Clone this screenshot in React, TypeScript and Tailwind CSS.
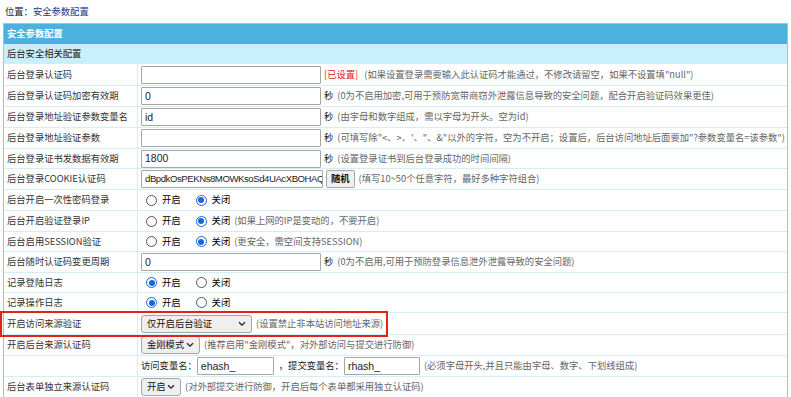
import React from 'react';

const font = { fontFamily: '"Noto Sans CJK SC", "Noto Sans", sans-serif' };
const latin = { fontFamily: '"Liberation Sans", "Noto Sans CJK SC", sans-serif' };

const Radio = ({ checked, label, last }: { checked?: boolean; label: string; last?: boolean }) => (
  <span className={`inline-flex items-center ${last ? '' : 'mr-[15px]'}`}>
    <span
      className={`inline-flex items-center justify-center w-[11px] h-[11px] rounded-full border bg-white ${
        checked ? 'border-[#1a66d6]' : 'border-[#555]'
      }`}
    >
      {checked && <span className="w-[6px] h-[6px] rounded-full bg-[#1a66d6]" />}
    </span>
    <span className="ml-[5px]">{label}</span>
  </span>
);

const Input = ({
  value = '',
  w = 'w-[180px]',
  size = 'text-[10.5px]',
}: {
  value?: string;
  w?: string;
  size?: string;
}) => (
  <span
    className={`inline-flex items-center h-[18px] ${w} ${size} shrink-0 border border-[#a6a6a6] bg-white px-[3px] text-[#222] rounded-[1px] overflow-hidden whitespace-nowrap`}
    style={latin}
  >
    {value}
  </span>
);

const Select = ({ label, w }: { label: string; w: string }) => (
  <span
    className={`inline-flex items-center justify-between h-[18px] ${w} shrink-0 border border-[#a6a6a6] bg-[#efefef] rounded-[3px] pl-[5px] pr-[5px] text-[9.3px] text-[#111]`}
  >
    <span>{label}</span>
    <svg width="8" height="6" viewBox="0 0 8 6">
      <path d="M1 1.2l3 3 3-3" fill="none" stroke="#222" strokeWidth="1.3" />
    </svg>
  </span>
);

const Hint = ({ children }: { children: React.ReactNode }) => (
  <span className="text-[#666] ml-[4px]">{children}</span>
);

const Sec = () => <span className="ml-[3px] text-[#222]">秒</span>;

const Row = ({
  label,
  children,
  h = 'h-[21px]',
}: {
  label?: string;
  children: React.ReactNode;
  h?: string;
}) => (
  <div className={`flex ${h} border-b border-[#d5eef6] bg-white`}>
    <div className="w-[134px] shrink-0 flex items-center pl-[3px] border-r border-[#d5eef6] text-[#333]">
      {label}
    </div>
    <div className="flex items-center pl-[3px] whitespace-nowrap">{children}</div>
  </div>
);

const Radios = ({ on }: { on: boolean }) => (
  <span className="pl-[5px] inline-flex items-center">
    <Radio checked={on} label="开启" />
    <Radio checked={!on} label="关闭" last />
  </span>
);

export default function App() {
  return (
    <div className="w-[791px] h-[397px] overflow-hidden bg-white text-[9.3px] leading-none" style={font}>
      <div className="h-[23px] flex items-center pl-[5px] text-[#222]">
        位置：<span className="text-[#17388c]">安全参数配置</span>
      </div>
      <div className="mx-[3px] border border-[#8ccbe3]">
        <div className="h-[20px] bg-[#4cb1dc] flex items-center pl-[3px] text-white font-bold">安全参数配置</div>
        <div className="h-[20px] bg-[#c9effc] flex items-center pl-[3px] text-[#222] border-b border-[#d5eef6]">
          后台安全相关配置
        </div>
        <Row label="后台登录认证码" h="h-[22px]">
          <Input />
          <span className="text-[#e01b1b] ml-[3px]">[已设置]</span>
          <Hint>&nbsp;(如果设置登录需要输入此认证码才能通过，不修改请留空，如果不设置填"null")</Hint>
        </Row>
        <Row label="后台登录认证码加密有效期">
          <Input value="0" />
          <Sec />
          <Hint>(0为不启用加密,可用于预防宽带商窃外泄露信息导致的安全问题，配合开启验证码效果更佳)</Hint>
        </Row>
        <Row label="后台登录地址验证参数变量名">
          <Input value="id" />
          <Sec />
          <Hint>(由字母和数字组成，需以字母为开头。空为id)</Hint>
        </Row>
        <Row label="后台登录地址验证参数">
          <Input />
          <Sec />
          <Hint>(可填写除"&lt;、&gt;、'、"、&amp;"以外的字符，空为不开启；设置后，后台访问地址后面要加"?参数变量名=该参数")</Hint>
        </Row>
        <Row label="后台登录证书发数据有效期" h="h-[20px]">
          <Input value="1800" />
          <Sec />
          <Hint>(设置登录证书到后台登录成功的时间间隔)</Hint>
        </Row>
        <Row label="后台登录COOKIE认证码">
          <Input
            value="dBpdkOsPEKNs8MOWKsoSd4UAcXBOHAQ"
            w="w-[182px]"
            size="text-[9.6px] tracking-[-0.45px]"
          />
          <span className="ml-[3px] inline-flex items-center h-[18px] px-[4px] border border-[#a6a6a6] bg-[#efefef] rounded-[2px] text-[#111] font-bold">
            随机
          </span>
          <Hint>(填写10~50个任意字符，最好多种字符组合)</Hint>
        </Row>
        <Row label="后台开启一次性密码登录">
          <Radios on={false} />
        </Row>
        <Row label="后台开启验证登录IP">
          <Radios on={false} />
          <Hint>(如果上网的IP是变动的，不要开启)</Hint>
        </Row>
        <Row label="后台启用SESSION验证" h="h-[20px]">
          <Radios on={false} />
          <Hint>(更安全，需空间支持SESSION)</Hint>
        </Row>
        <Row label="后台随时认证码变更周期">
          <Input value="0" />
          <Sec />
          <Hint>(0为不启用,可用于预防登录信息泄外泄露导致的安全问题)</Hint>
        </Row>
        <Row label="记录登陆日志" h="h-[20px]">
          <Radios on />
        </Row>
        <Row label="记录操作日志" h="h-[20px]">
          <Radios on />
        </Row>
        <div className="relative">
          <Row label="开启访问来源验证" h="h-[22px]">
            <Select label="仅开启后台验证" w="w-[111px]" />
            <Hint>(设置禁止非本站访问地址来源)</Hint>
          </Row>
          <div className="absolute -left-[4px] top-[-2px] w-[388px] h-[26px] border-2 border-[#e2231a] pointer-events-none" />
        </div>
        <Row label="开启后台来源认证码">
          <Select label="金刚模式" w="w-[59px]" />
          <Hint>(推荐启用"金刚模式"，对外部访问与提交进行防御)</Hint>
        </Row>
        <Row h="h-[21px]">
          <span className="text-[#222]">访问变量名：</span>
          <Input value="ehash_" w="w-[77px]" />
          <span className="text-[#222] ml-[5px]">，提交变量名：</span>
          <Input value="rhash_" w="w-[76px]" />
          <Hint>(必须字母开头,并且只能由字母、数字、下划线组成)</Hint>
        </Row>
        <Row label="后台表单独立来源认证码">
          <Select label="开启" w="w-[40px]" />
          <Hint>(对外部提交进行防御，开启后每个表单都采用独立认证码)</Hint>
        </Row>
      </div>
    </div>
  );
}
